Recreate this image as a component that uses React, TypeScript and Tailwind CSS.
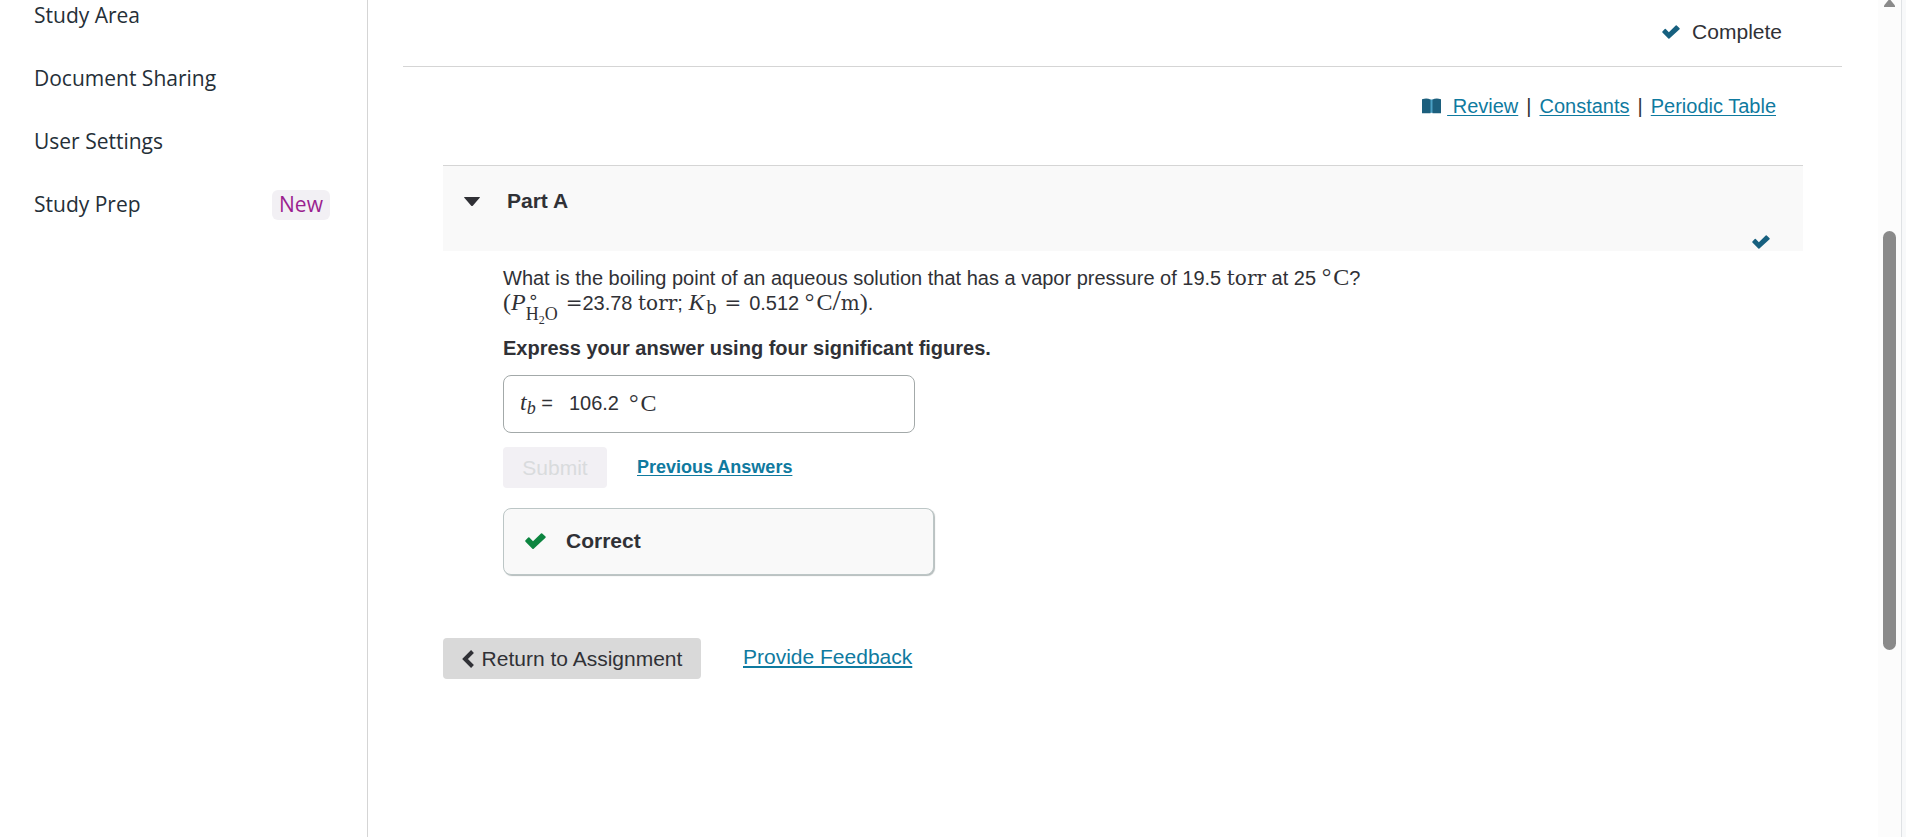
import { useState, type ReactNode } from "react";

const NAV_ITEMS = [
  { label: "Study Area", badge: "" },
  { label: "Document Sharing", badge: "" },
  { label: "User Settings", badge: "" },
  { label: "Study Prep", badge: "New" },
];

const linkClass = "text-[#0f7a9f] underline decoration-1 underline-offset-2";

function CheckIcon({ className }: { className: string }) {
  return (
    <svg viewBox="0 0 21 16" className={className} fill="currentColor" aria-hidden="true">
      <path d="M0.5 7.3 3.2 4.6Q3.8 4.1 4.4 4.6L8 8.2 16 .4Q16.6-.1 17.2.4L20.5 3.5Q21 4.1 20.5 4.7L8.7 15.7Q8 16.2 7.4 15.7L.5 8.7Q-.1 8 .5 7.3Z" />
    </svg>
  );
}

function BookIcon() {
  return (
    <svg viewBox="0 0 19 16" className="h-4 w-[19px]" fill="#1c5f7d" aria-hidden="true">
      <path d="M8 1.500h3V14.800H8Z" fill="#4aa0c4" />
      <path d="M0 1.200Q5-.2 8.500 1.500V15.300H0Z" />
      <path d="M10.500 1.500Q14-.2 19 1.200V15.300H10.500Z" />
    </svg>
  );
}

// Upright maths text: unit symbols and variables
function Sym({ children, italic = false }: { children: ReactNode; italic?: boolean }) {
  return (
    <span className={`font-['Liberation_Serif',serif] text-2xl leading-none ${italic ? "italic" : ""}`}>
      {children}
    </span>
  );
}

function Unit({ children }: { children: ReactNode }) {
  return <span className="font-['DejaVu_Serif',serif] text-xl leading-none">{children}</span>;
}

function Celsius() {
  return (
    <Sym>
      <span className="mr-0.5">°</span>C
    </Sym>
  );
}

function Sidebar() {
  return (
    <aside className="w-[368px] shrink-0 overflow-hidden border-r border-[#d5d5d5]">
      <nav className="-mt-4 font-['Open_Sans',sans-serif] text-[21px] text-[#252f38]">
        {NAV_ITEMS.map((item) => (
          <a key={item.label} href="#" className="flex h-[63px] items-center justify-between pr-[37px] pl-[34px]">
            {item.label}
            {item.badge && (
              <span className="flex h-[30px] w-[58px] items-center justify-center rounded-md bg-[#f2f0f4] text-[#9b1f8f]">
                {item.badge}
              </span>
            )}
          </a>
        ))}
      </nav>
    </aside>
  );
}

function ScrollTrack() {
  return (
    <div className="flex w-7 shrink-0 bg-[#f8f9fa]" aria-hidden="true">
      <div className="flex w-6 flex-col items-center border-r border-[#dfe2e5] bg-[#fcfcfc]">
        <svg viewBox="0 0 11 7" className="h-[7px] w-[11px]" fill="#8a8a8a">
          <path d="M4.500 0h2L11 5.500V7H0V5.500Z" />
        </svg>
        <div className="mt-56 h-[419px] w-[13px] rounded-full bg-[#8a8a8a]" />
      </div>
    </div>
  );
}

function PartA() {
  const [answer, setAnswer] = useState("106.2");

  return (
    <section>
      <header className="flex h-[86px] justify-between border-t border-[#d5d5d5] bg-[#f9f9f9] pr-[33px] pl-[21px]">
        <button className="flex h-[70px] items-center gap-[27px] text-[21px] font-bold" aria-expanded="true">
          <svg viewBox="0 0 16 9" className="h-[9px] w-4" fill="currentColor" aria-hidden="true">
            <path d="M.5 0h15q.8 0 .2.800L9 8.400Q8 9.400 7 8.400L.3.800Q-.3 0 .5 0Z" />
          </svg>
          Part A
        </button>
        <CheckIcon className="mb-0.5 h-3.5 w-[18px] self-end text-[#17607f]" />
      </header>

      <div className="pt-3.5 pl-[60px]">
        <div className="text-xl leading-[25px]">
          <p className="h-[25px]">
            What is the boiling point of an aqueous solution that has a vapor pressure of 19.5 <Unit>torr</Unit> at 25{" "}
            <Celsius />?
          </p>
          <p className="flex h-[25px] items-baseline whitespace-pre">
            <Sym>(</Sym>
            <Sym italic>P</Sym>
            {/* degree sign stacked over the H2O subscript */}
            <span className="flex flex-col self-start text-lg">
              <span className="ml-0.5 h-[18px] font-['DejaVu_Sans',sans-serif] leading-[14px]">∘</span>
              <span className="flex items-baseline font-['Liberation_Serif',serif] leading-3">
                H<small className="relative top-1 text-xs leading-3">2</small>O
              </span>
            </span>
            <span className="ml-2">
              <Unit>=</Unit>
            </span>
            23.78 <Unit>torr</Unit>; <Sym italic>K</Sym>
            <span className="relative top-1 ml-0.5 font-['Liberation_Serif',serif] text-xl leading-none">b</span>
            <span className="mx-2">
              <Unit>=</Unit>
            </span>
            0.512 <Celsius />
            <span className="font-['Liberation_Serif',serif] text-3xl leading-[18px]">/</span>
            <Unit>m</Unit>
            <Sym>)</Sym>.
          </p>
        </div>

        <p className="mt-[18px] text-xl leading-[30px] font-bold">Express your answer using four significant figures.</p>

        <div className="mt-3 flex h-[58px] w-[412px] items-center rounded-lg border border-[#a3a9a9] pb-0.5 pl-4 text-xl">
          <label htmlFor="answer" className="whitespace-pre">
            <Sym italic>t</Sym>
            <span className="relative top-1 font-['Liberation_Serif',serif] text-lg leading-none italic">b</span> =
          </label>
          <input
            id="answer"
            value={answer}
            onChange={(e) => setAnswer(e.target.value)}
            className="ml-4 w-[60px] bg-transparent outline-none"
          />
          <Celsius />
        </div>

        <div className="mt-3.5 flex items-center gap-[30px]">
          <button disabled className="h-[41px] w-[104px] rounded-sm bg-[#f2f0f4] text-[21px] text-[#d9dbdd]">
            Submit
          </button>
          <a href="#" className={`pb-0.5 text-lg font-bold ${linkClass}`}>
            Previous Answers
          </a>
        </div>

        <div className="mt-5 flex h-[67px] w-[431px] items-center gap-5 rounded-lg border border-[#bcc6c6] bg-[#f9f9f9] pb-0.5 pl-[21px] text-[21px] font-bold shadow-[1px_1px_1px_#b5bcbc]">
          <CheckIcon className="h-4 w-[21px] text-[#0d8540]" />
          Correct
        </div>
      </div>
    </section>
  );
}

export default function App() {
  return (
    <div className="flex h-screen overflow-hidden bg-white font-['Liberation_Sans',sans-serif] text-[#303136]">
      <Sidebar />

      <main className="min-w-0 flex-1 pr-9 pl-[35px]">
        <div className="flex h-[67px] items-center justify-end gap-3 border-b border-[#d5d5d5] pr-[60px] pb-0.5 text-[21px]">
          <CheckIcon className="h-3.5 w-[18px] text-[#17607f]" />
          Complete
        </div>

        <div className="pr-[39px] pl-10">
          <div className="flex h-[98px] items-start justify-end pt-[25px] pr-[27px] text-xl">
            <div className="flex items-center whitespace-pre">
              <BookIcon />
              <a href="#" className={`ml-1.5 ${linkClass}`}>
                {" Review"}
              </a>
              <span className="mx-2">|</span>
              <a href="#" className={linkClass}>
                Constants
              </a>
              <span className="mx-2">|</span>
              <a href="#" className={linkClass}>
                Periodic Table
              </a>
            </div>
          </div>

          <PartA />

          <div className="mt-[63px] flex items-center gap-[42px] text-[21px]">
            <button className="flex h-[41px] w-[258px] items-center justify-center gap-2 rounded-sm bg-[#d9d9d9]">
              <svg viewBox="0 0 12 18" className="h-[18px] w-3" fill="none" stroke="currentColor" strokeWidth="4" aria-hidden="true">
                <path d="M10.500 1.500 3 9l7.500 7.500" />
              </svg>
              Return to Assignment
            </button>
            <a href="#" className="pb-1 text-[#0f7a9f] underline decoration-2 underline-offset-2">
              Provide Feedback
            </a>
          </div>
        </div>
      </main>

      <ScrollTrack />
    </div>
  );
}
